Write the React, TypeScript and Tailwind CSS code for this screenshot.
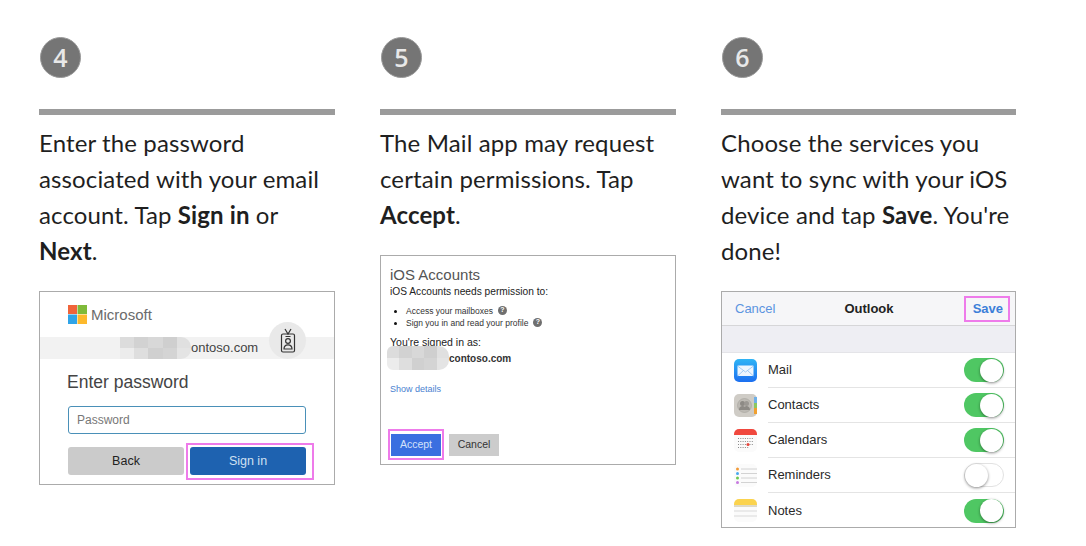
import type { ReactNode } from 'react'

function Step({ n, last, children, shot }: { n: number; last?: boolean; children: ReactNode; shot: ReactNode }) {
  return (
    <div className={last ? 'w-[295px] shrink-0' : 'w-[296px] shrink-0'}>
      <div className="ml-px -mt-px w-[41px] h-[41px] rounded-full bg-[#757575] border border-[#9a9a9a] flex items-center justify-center text-[#e8e8e8] text-[25px] font-semibold leading-none font-['Open_Sans',sans-serif]">
        {n}
      </div>
      <div className="h-[6px] bg-[#9b9b9b] mt-[31px]" />
      <p className="mt-[10px] text-[24px] leading-[36px] tracking-[0.12px] text-[#1f1f1f] font-['Lato',sans-serif] font-normal">
        {children}
      </p>
      {shot}
    </div>
  )
}

function MsLogo() {
  return (
    <svg width="19" height="19" viewBox="0 0 19 19" className="shrink-0">
      <rect x="0" y="0" width="9" height="9" fill="#f0643a" />
      <rect x="9.500" y="0" width="9.500" height="9" fill="#7fba3a" />
      <rect x="0" y="9.500" width="9" height="9.500" fill="#2fa4e8" />
      <rect x="9.500" y="9.500" width="9.500" height="9.500" fill="#fdb92c" />
    </svg>
  )
}

function BadgeIcon() {
  return (
    <svg width="16" height="26" viewBox="0 0 16 26" fill="none" stroke="#333" strokeWidth="1.2">
      <rect x="1.500" y="6" width="13" height="18" rx="1.500" />
      <path d="M5 1l3 5 3-5M5.500 8.500h5" />
      <circle cx="8" cy="13" r="2.400" />
      <path d="M4 21c0-3 1.800-4.200 4-4.200s4 1.200 4 4.200z" />
    </svg>
  )
}

function Blur({ className }: { className: string }) {
  return (
    <div className={`grid grid-cols-5 overflow-hidden ${className}`}>
      {['#dcdcdc', '#d2d2d2', '#d8d8d8', '#cfcfcf', '#e0e0e0', '#ececec', '#dedede', '#d0d0d0', '#d4d4d4', '#e4e4e4'].map((c, i) => (
        <div key={i} style={{ backgroundColor: c }} />
      ))}
    </div>
  )
}

function SignInShot() {
  return (
    <div className="mt-[22px] h-[194px] border border-[#ababab] bg-white font-['Liberation_Sans',sans-serif]">
      <div className="flex items-center gap-[4px] pl-[28px] pt-[13px] h-[31px]">
        <MsLogo />
        <span className="text-[15px] leading-none text-[#6b6b6b]">Microsoft</span>
      </div>
      <div className="mt-[14px] h-[22px] bg-[#f2f2f2] flex items-center relative">
        <Blur className="ml-[80px] w-[71px] h-[22px] rounded-r-[10px]" />
        <span className="text-[13px] text-[#444]">ontoso.com</span>
        <div className="absolute left-[229px] top-[-15px] w-[37px] h-[37px] rounded-full bg-[#e9e9e9] flex items-center justify-center">
          <BadgeIcon />
        </div>
      </div>
      <div className="ml-[27px] mt-[13px] text-[17.5px] leading-[20px] text-[#444]">Enter password</div>
      <div className="ml-[28px] mt-[14px] w-[238px] h-[28px] border border-[#4a90b8] rounded-[3px] flex items-center pl-[8px] text-[12px] text-[#777]">
        Password
      </div>
      <div className="ml-[28px] mt-[13px] flex gap-[6px] text-[12.5px] relative">
        <div className="w-[116px] h-[28px] rounded-[3px] bg-[#cbcbcb] text-[#222] flex items-center justify-center">Back</div>
        <div className="w-[116px] h-[28px] rounded-[3px] bg-[#1e62b0] text-[#cfe0f2] flex items-center justify-center">Sign in</div>
        <div className="absolute left-[118px] top-[-4px] w-[128px] h-[37px] border-2 border-[#ee7bea]" />
      </div>
    </div>
  )
}

function Help() {
  return (
    <span className="inline-flex w-[9px] h-[9px] rounded-full bg-[#6f6f6f] text-white text-[7px] font-bold items-center justify-center ml-[5px] align-[2px]">
      ?
    </span>
  )
}

function AccountsShot() {
  return (
    <div className="mt-[22px] h-[210px] border border-[#ababab] bg-white pl-[9px] text-[#222] font-['Liberation_Sans',sans-serif]">
      <div className="mt-[10px] text-[15px] leading-[18px] text-[#555]">iOS Accounts</div>
      <div className="text-[10.2px] leading-[13px] mt-[1px]">iOS Accounts needs permission to:</div>
      <ul className="mt-[7px] text-[8.5px] leading-[12px] text-[#333] list-disc pl-[16px] marker:text-[#111]">
        <li>Access your mailboxes<Help /></li>
        <li>Sign you in and read your profile<Help /></li>
      </ul>
      <div className="text-[10.5px] leading-[13px] mt-[7px]">You're signed in as:</div>
      <div className="flex items-center h-[20px] -ml-[3px] -mt-[1px]">
        <Blur className="w-[62px] h-[24px] rounded-r-[10px] rounded-l-[6px]" />
        <span className="text-[10px] font-bold text-[#333]">contoso.com</span>
      </div>
      <div className="mt-[15px] text-[9px] leading-[12px] text-[#4a7fd0]">Show details</div>
      <div className="mt-[39px] flex gap-[8px] ml-px text-[10.5px] relative">
        <div className="w-[50px] h-[22px] bg-[#3a6fe0] text-[#d5e2fa] flex items-center justify-center">Accept</div>
        <div className="w-[50px] h-[22px] bg-[#cccccc] text-[#333] flex items-center justify-center">Cancel</div>
        <div className="absolute left-[-3px] top-[-5px] w-[56px] h-[31px] border-2 border-[#ee7bea]" />
      </div>
    </div>
  )
}

function AppIcon({ name }: { name: string }) {
  if (name === 'Mail')
    return (
      <svg width="23" height="23" viewBox="0 0 23 23">
        <defs>
          <linearGradient id="mailbg" x1="0" y1="0" x2="0" y2="1">
            <stop offset="0" stopColor="#2fb4f5" />
            <stop offset="1" stopColor="#1c6ff0" />
          </linearGradient>
        </defs>
        <rect width="23" height="23" rx="5" fill="url(#mailbg)" />
        <rect x="3.500" y="6.500" width="16" height="10.500" rx="1" fill="#eef6fe" />
        <path d="M3.500 7l8 6 8-6M3.500 17l6-5.500M19.500 17l-6-5.500" fill="none" stroke="#8fc0f0" strokeWidth="0.8" />
      </svg>
    )
  if (name === 'Contacts')
    return (
      <svg width="23" height="23" viewBox="0 0 23 23">
        <rect width="23" height="23" rx="5" fill="#cfccc6" />
        <rect x="20" y="3" width="3" height="6" fill="#6fb0e8" />
        <rect x="20" y="9" width="3" height="5" fill="#8cc860" />
        <rect x="20" y="14" width="3" height="6" fill="#f0a030" />
        <circle cx="10.500" cy="11.500" r="7" fill="#bdbab4" stroke="#a5a29c" strokeWidth="0.6" />
        <circle cx="8.500" cy="9.500" r="2.500" fill="#8d8a85" />
        <circle cx="12.500" cy="9.500" r="2.500" fill="#9b9893" />
        <path d="M5 16c0-3 1.500-4 3.500-4s3.500 1 3.500 4zM10 16c0-3 1-4 2.500-4s3.500 1 3.500 4z" fill="#8d8a85" />
      </svg>
    )
  if (name === 'Calendars')
    return (
      <svg width="23" height="23" viewBox="0 0 23 23">
        <rect width="23" height="23" rx="5" fill="#fbfbfb" />
        <path d="M0 6V5a5 5 0 0 1 5-5h13a5 5 0 0 1 5 5v1z" fill="#f0483e" />
        <path d="M4 9.500h15M4 12.500h15M4 15.500h15M4 18.500h11" stroke="#8a8a8a" strokeWidth="1" strokeDasharray="1 1.300" />
        <circle cx="14" cy="15.500" r="1.500" fill="#e8463c" />
      </svg>
    )
  if (name === 'Reminders')
    return (
      <svg width="23" height="23" viewBox="0 0 23 23">
        <rect width="23" height="23" rx="5" fill="#fbfbfb" />
        <circle cx="3.500" cy="5" r="1.500" fill="#f29a38" />
        <circle cx="3.500" cy="9.500" r="1.500" fill="#4aa8ee" />
        <circle cx="3.500" cy="14" r="1.500" fill="#6cc850" />
        <circle cx="3.500" cy="18.500" r="1.500" fill="#c77ae0" />
        <path d="M7 5h16M7 9.500h16M7 14h16M7 18.500h16" stroke="#c9c9c9" strokeWidth="0.8" />
      </svg>
    )
  return (
    <svg width="23" height="23" viewBox="0 0 23 23">
      <rect width="23" height="23" rx="5" fill="#fbfbfb" />
      <path d="M0 6V5a5 5 0 0 1 5-5h13a5 5 0 0 1 5 5v1z" fill="#fbd34e" />
      <path d="M0 7h23" stroke="#b5a878" strokeWidth="0.8" />
      <path d="M0 12h23M0 17h23" stroke="#d2d2d2" strokeWidth="0.8" />
    </svg>
  )
}

function Toggle({ on }: { on: boolean }) {
  return (
    <div className={on ? 'w-[40px] h-[24px] rounded-full bg-[#4fc763] flex items-center justify-end pr-px' : 'w-[40px] h-[24px] rounded-full bg-white border border-[#e2e2e2] flex items-center'}>
      <div className="w-[23px] h-[23px] rounded-full bg-white shadow-[0_1px_3px_rgba(0,0,0,0.45)]" />
    </div>
  )
}

const services = [
  { name: 'Mail', on: true },
  { name: 'Contacts', on: true },
  { name: 'Calendars', on: true },
  { name: 'Reminders', on: false },
  { name: 'Notes', on: true },
]

function SyncShot() {
  return (
    <div className="mt-[22px] h-[237px] border border-[#ababab] bg-white overflow-hidden font-['Liberation_Sans',sans-serif]">
      <div className="h-[34px] bg-[#f6f6f8] border-b border-[#d6d6d8] grid grid-cols-[1fr_auto_1fr] items-center pl-[13px] pr-[12px] text-[13px] relative">
        <span className="text-[#5b94e0]">Cancel</span>
        <span className="font-bold text-[#222]">Outlook</span>
        <span className="font-bold text-[#3d7fd8] text-right">Save</span>
        <div className="absolute right-[5px] top-[4px] w-[46px] h-[26px] border-2 border-[#ee7bea]" />
      </div>
      <div className="h-[27px] bg-[#eeeef3] border-b border-[#e4e4e8]" />
      {services.map((s, i) => (
        <div key={s.name} className="flex items-center h-[35px] pl-[12px]">
          <AppIcon name={s.name} />
          <div className={i === 4 ? 'flex-1 h-full ml-[11px] flex items-center justify-between pr-[11px]' : 'flex-1 h-full ml-[11px] flex items-center justify-between pr-[11px] border-b border-[#e4e4e4]'}>
            <span className="text-[13px] text-[#2a2a2a]">{s.name}</span>
            <Toggle on={s.on} />
          </div>
        </div>
      ))}
    </div>
  )
}

export default function App() {
  return (
    <div className="w-[1086px] h-[546px] bg-white flex gap-[45px] pl-[39px] pt-[38px] overflow-hidden">
      <Step n={4} shot={<SignInShot />}>
        Enter the password associated with your email account. Tap <b className="font-bold">Sign in</b> or <b className="font-bold">Next</b>.
      </Step>
      <Step n={5} shot={<AccountsShot />}>
        The Mail app may request certain permissions. Tap <b className="font-bold">Accept</b>.
      </Step>
      <Step n={6} last shot={<SyncShot />}>
        Choose the services you want to sync with your iOS device and tap <b className="font-bold">Save</b>. You're done!
      </Step>
    </div>
  )
}
